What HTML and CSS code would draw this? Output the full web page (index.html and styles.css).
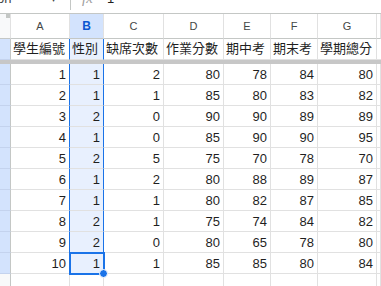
FILE: index.html
```html
<!DOCTYPE html>
<html lang="zh-Hant">

<head>
    <meta charset="UTF-8">
    <title>成績表</title>
    <link rel="stylesheet" href="styles.css">
</head>

<body>

    <div class="toolbar">
        <span class="font-name">on</span>
        <span class="caret">▾</span>
        <span class="divider"></span>
        <span class="fx">fx</span>
        <span class="formula">1</span>
    </div>

    <div class="sheet">
        <div class="row col-head">
            <div class="cell corner"><span class="grip"></span></div>
            <div class="cell">A</div>
            <div class="cell on">B</div>
            <div class="cell">C</div>
            <div class="cell">D</div>
            <div class="cell">E</div>
            <div class="cell">F</div>
            <div class="cell">G</div>
            <div class="cell"></div>
        </div>

        <div class="row titles">
            <div class="cell rh"></div>
            <div class="cell sel-edge">學生編號</div>
            <div class="cell sel">性別</div>
            <div class="cell">缺席次數</div>
            <div class="cell">作業分數</div>
            <div class="cell">期中考</div>
            <div class="cell">期末考</div>
            <div class="cell">學期總分</div>
            <div class="cell"></div>
        </div>

        <div class="freeze"></div>

        <div class="row num">
            <div class="cell rh"></div>
            <div class="cell sel-edge">1</div><div class="cell sel">1</div><div class="cell">2</div>
            <div class="cell">80</div><div class="cell">78</div><div class="cell">84</div><div class="cell">80</div>
            <div class="cell"></div>
        </div>
        <div class="row num">
            <div class="cell rh"></div>
            <div class="cell sel-edge">2</div><div class="cell sel">1</div><div class="cell">1</div>
            <div class="cell">85</div><div class="cell">80</div><div class="cell">83</div><div class="cell">82</div>
            <div class="cell"></div>
        </div>
        <div class="row num">
            <div class="cell rh"></div>
            <div class="cell sel-edge">3</div><div class="cell sel">2</div><div class="cell">0</div>
            <div class="cell">90</div><div class="cell">90</div><div class="cell">89</div><div class="cell">89</div>
            <div class="cell"></div>
        </div>
        <div class="row num">
            <div class="cell rh"></div>
            <div class="cell sel-edge">4</div><div class="cell sel">1</div><div class="cell">0</div>
            <div class="cell">85</div><div class="cell">90</div><div class="cell">90</div><div class="cell">95</div>
            <div class="cell"></div>
        </div>
        <div class="row num">
            <div class="cell rh"></div>
            <div class="cell sel-edge">5</div><div class="cell sel">2</div><div class="cell">5</div>
            <div class="cell">75</div><div class="cell">70</div><div class="cell">78</div><div class="cell">70</div>
            <div class="cell"></div>
        </div>
        <div class="row num">
            <div class="cell rh"></div>
            <div class="cell sel-edge">6</div><div class="cell sel">1</div><div class="cell">2</div>
            <div class="cell">80</div><div class="cell">88</div><div class="cell">89</div><div class="cell">87</div>
            <div class="cell"></div>
        </div>
        <div class="row num">
            <div class="cell rh"></div>
            <div class="cell sel-edge">7</div><div class="cell sel">1</div><div class="cell">1</div>
            <div class="cell">80</div><div class="cell">82</div><div class="cell">87</div><div class="cell">85</div>
            <div class="cell"></div>
        </div>
        <div class="row num">
            <div class="cell rh"></div>
            <div class="cell sel-edge">8</div><div class="cell sel">2</div><div class="cell">1</div>
            <div class="cell">75</div><div class="cell">74</div><div class="cell">84</div><div class="cell">82</div>
            <div class="cell"></div>
        </div>
        <div class="row num">
            <div class="cell rh"></div>
            <div class="cell sel-edge">9</div><div class="cell sel">2</div><div class="cell">0</div>
            <div class="cell">80</div><div class="cell">65</div><div class="cell">78</div><div class="cell">80</div>
            <div class="cell"></div>
        </div>
        <div class="row num">
            <div class="cell rh"></div>
            <div class="cell sel-edge">10</div><div class="cell sel active">1</div><div class="cell">1</div>
            <div class="cell">85</div><div class="cell">85</div><div class="cell">80</div><div class="cell">84</div>
            <div class="cell"></div>
        </div>
        <div class="row num">
            <div class="cell rh-off"></div>
            <div class="cell"></div><div class="cell"></div><div class="cell"></div>
            <div class="cell"></div><div class="cell"></div><div class="cell"></div><div class="cell"></div>
            <div class="cell"></div>
        </div>
    </div>

</body>

</html>
```

FILE: styles.css
```css
* {
    margin: 0;
    padding: 0;
    box-sizing: border-box;
}

body {
    font-family: 'Liberation Sans', Arial, 'Noto Sans CJK TC', sans-serif;
    font-size: 13px;
    color: #1f1f1f;
    background-color: #ffffff;
    overflow: hidden;
}

/* formula bar, only its lower edge is visible */
.toolbar {
    height: 14px;
    display: flex;
    align-items: flex-start;
    border-bottom: 1px solid #c4c7c5;
    overflow: hidden;
    color: #444746;
}

.toolbar span {
    margin-top: -9px;
    line-height: 15px;
}

.font-name {
    width: 54px;
    margin-left: -3px;
}

.caret {
    font-size: 10px;
    width: 19px;
}

.toolbar .divider {
    margin-top: 0;
    width: 1px;
    height: 10px;
    background-color: #c4c7c5;
    margin-right: 11px;
}

.fx {
    font-family: 'Liberation Serif', serif;
    font-style: italic;
    font-size: 15px;
    color: #a0a0a0;
    width: 25px;
}

.formula {
    color: #1f1f1f;
}

/* grid */
.row {
    display: grid;
    grid-template-columns: 11px 59px 34px 60px 60px 47px 47px 59px 1fr;
}

.cell {
    border-right: 1px solid #e1e1e1;
    border-bottom: 1px solid #e1e1e1;
    overflow: hidden;
    white-space: nowrap;
}

.col-head .cell {
    height: 25px;
    display: flex;
    align-items: center;
    justify-content: center;
    font-size: 11px;
    color: #444746;
    border-bottom-color: #c4c7c5;
}

.col-head .corner {
    background-color: #f8f9fa;
    align-items: flex-start;
    justify-content: flex-end;
}

.grip {
    width: 4px;
    height: 4px;
    background-color: #c4c7c5;
}

.col-head .on {
    background-color: #d3e3fd;
    color: #0b57d0;
    font-weight: bold;
    font-size: 12px;
}

.titles .cell {
    height: 21px;
    display: flex;
    align-items: flex-end;
    padding: 0 2px 3px 2px;
    line-height: 15px;
    font-size: 13px;
}

.freeze {
    height: 4px;
    background-color: #c7c7c7;
}

.num .cell {
    height: 21px;
    display: flex;
    align-items: flex-end;
    justify-content: flex-end;
    padding: 0 3px 2px 0;
    line-height: 15px;
}

.row .rh {
    background-color: #d3e3fd;
    border-right-color: #c4c7c5;
    border-bottom-color: #c4d3ee;
}

.row .rh-off {
    background-color: #f8f9fa;
    border-right-color: #c4c7c5;
}

/* selected column B */
.row .sel-edge {
    border-right-color: #1a73e8;
}

.row .sel {
    background-color: #e8f0fe;
    border-right-color: #1a73e8;
}

.row .active {
    position: relative;
    overflow: visible;
    outline: 2px solid #1a73e8;
    outline-offset: -1px;
}

.active::after {
    content: "";
    position: absolute;
    right: -5px;
    bottom: -5px;
    width: 7px;
    height: 7px;
    border-radius: 50%;
    background-color: #1a73e8;
    border: 1px solid #ffffff;
    z-index: 2;
}
```
